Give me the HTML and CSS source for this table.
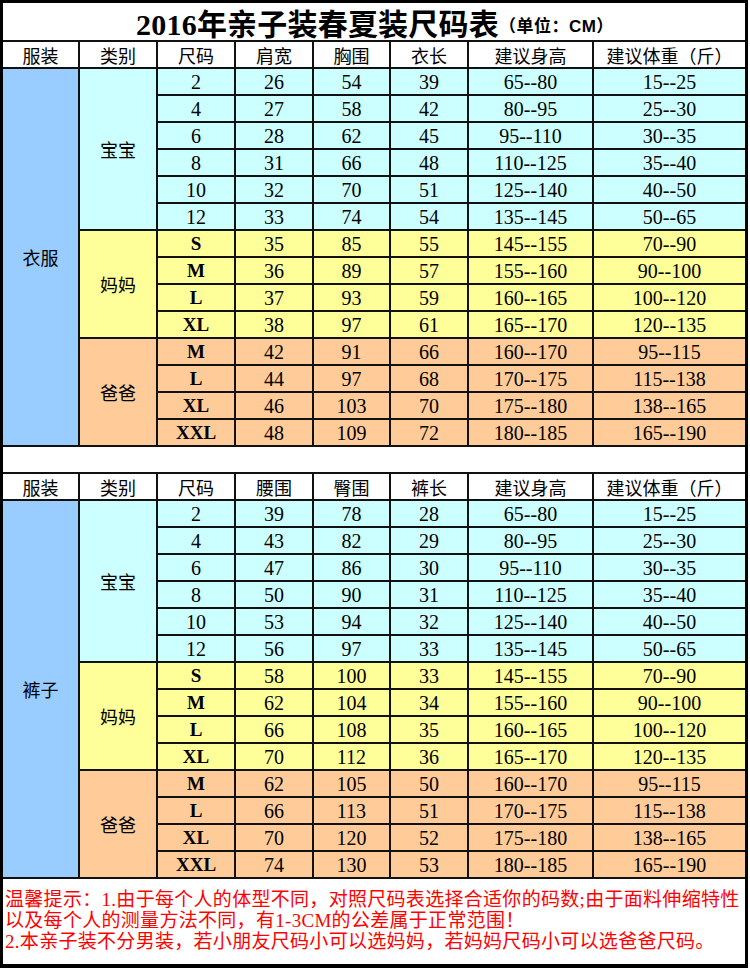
FILE: index.html
```html
<!DOCTYPE html>
<html lang="zh-CN">
<head>
<meta charset="utf-8">
<title>2016年亲子装春夏装尺码表</title>
<link rel="stylesheet" href="styles.css">
</head>
<body>
<div class="sheet">
  <div class="title"><span class="t-main">2016年亲子装春夏装尺码表</span><span class="t-unit">（单位：CM）</span></div>

  <div class="row head">
    <div>服装</div><div>类别</div><div>尺码</div><div>肩宽</div><div>胸围</div><div>衣长</div><div>建议身高</div><div>建议体重（斤）</div>
  </div>

  <div class="row b">
    <div class="group g-top">衣服</div><div class="cat c6">宝宝</div>
    <div>2</div><div>26</div><div>54</div><div>39</div><div>65--80</div><div>15--25</div>
  </div>
  <div class="row b"><div>4</div><div>27</div><div>58</div><div>42</div><div>80--95</div><div>25--30</div></div>
  <div class="row b"><div>6</div><div>28</div><div>62</div><div>45</div><div>95--110</div><div>30--35</div></div>
  <div class="row b"><div>8</div><div>31</div><div>66</div><div>48</div><div>110--125</div><div>35--40</div></div>
  <div class="row b"><div>10</div><div>32</div><div>70</div><div>51</div><div>125--140</div><div>40--50</div></div>
  <div class="row b"><div>12</div><div>33</div><div>74</div><div>54</div><div>135--145</div><div>50--65</div></div>

  <div class="row m"><div class="cat c4">妈妈</div><div class="sz">S</div><div>35</div><div>85</div><div>55</div><div>145--155</div><div>70--90</div></div>
  <div class="row m"><div class="sz">M</div><div>36</div><div>89</div><div>57</div><div>155--160</div><div>90--100</div></div>
  <div class="row m"><div class="sz">L</div><div>37</div><div>93</div><div>59</div><div>160--165</div><div>100--120</div></div>
  <div class="row m"><div class="sz">XL</div><div>38</div><div>97</div><div>61</div><div>165--170</div><div>120--135</div></div>

  <div class="row p"><div class="cat c4">爸爸</div><div class="sz">M</div><div>42</div><div>91</div><div>66</div><div>160--170</div><div>95--115</div></div>
  <div class="row p"><div class="sz">L</div><div>44</div><div>97</div><div>68</div><div>170--175</div><div>115--138</div></div>
  <div class="row p"><div class="sz">XL</div><div>46</div><div>103</div><div>70</div><div>175--180</div><div>138--165</div></div>
  <div class="row p"><div class="sz">XXL</div><div>48</div><div>109</div><div>72</div><div>180--185</div><div>165--190</div></div>

  <div class="blank"></div>

  <div class="row head">
    <div>服装</div><div>类别</div><div>尺码</div><div>腰围</div><div>臀围</div><div>裤长</div><div>建议身高</div><div>建议体重（斤）</div>
  </div>

  <div class="row b">
    <div class="group g-top">裤子</div><div class="cat c6">宝宝</div>
    <div>2</div><div>39</div><div>78</div><div>28</div><div>65--80</div><div>15--25</div>
  </div>
  <div class="row b"><div>4</div><div>43</div><div>82</div><div>29</div><div>80--95</div><div>25--30</div></div>
  <div class="row b"><div>6</div><div>47</div><div>86</div><div>30</div><div>95--110</div><div>30--35</div></div>
  <div class="row b"><div>8</div><div>50</div><div>90</div><div>31</div><div>110--125</div><div>35--40</div></div>
  <div class="row b"><div>10</div><div>53</div><div>94</div><div>32</div><div>125--140</div><div>40--50</div></div>
  <div class="row b"><div>12</div><div>56</div><div>97</div><div>33</div><div>135--145</div><div>50--65</div></div>

  <div class="row m"><div class="cat c4">妈妈</div><div class="sz">S</div><div>58</div><div>100</div><div>33</div><div>145--155</div><div>70--90</div></div>
  <div class="row m"><div class="sz">M</div><div>62</div><div>104</div><div>34</div><div>155--160</div><div>90--100</div></div>
  <div class="row m"><div class="sz">L</div><div>66</div><div>108</div><div>35</div><div>160--165</div><div>100--120</div></div>
  <div class="row m"><div class="sz">XL</div><div>70</div><div>112</div><div>36</div><div>165--170</div><div>120--135</div></div>

  <div class="row p"><div class="cat c4">爸爸</div><div class="sz">M</div><div>62</div><div>105</div><div>50</div><div>160--170</div><div>95--115</div></div>
  <div class="row p"><div class="sz">L</div><div>66</div><div>113</div><div>51</div><div>170--175</div><div>115--138</div></div>
  <div class="row p"><div class="sz">XL</div><div>70</div><div>120</div><div>52</div><div>175--180</div><div>138--165</div></div>
  <div class="row p"><div class="sz">XXL</div><div>74</div><div>130</div><div>53</div><div>180--185</div><div>165--190</div></div>

  <div class="notes">温馨提示：1.由于每个人的体型不同，对照尺码表选择合适你的码数;由于面料伸缩特性<br>以及每个人的测量方法不同，有1-3CM的公差属于正常范围！<br>2.本亲子装不分男装，若小朋友尺码小可以选妈妈，若妈妈尺码小可以选爸爸尺码。</div>
</div>
</body>
</html>
```

FILE: styles.css
```css
html, body {
  margin: 0;
  padding: 0;
  background: #ffffff;
}

.sheet {
  box-sizing: border-box;
  width: 748px;
  height: 968px;
  border: 3px solid #000;
  border-bottom-width: 4px;
  background: #111;
  display: grid;
  grid-template-columns: 75px 76px 76px 76px 75px 76px 123px 151px;
  grid-template-rows: 37px repeat(31, 25px) 1fr;
  gap: 2px;
  font-family: "Liberation Serif", "Noto Sans CJK SC", serif;
  font-size: 20px;
  color: #000;
}

.row {
  display: contents;
}

.row > div {
  display: flex;
  align-items: center;
  justify-content: center;
  white-space: nowrap;
  line-height: 1;
}

.title {
  grid-column: 1 / -1;
  background: #fff;
  display: flex;
  align-items: center;
  justify-content: center;
  padding-left: 2px;
  white-space: nowrap;
}

.t-main {
  font-family: "Liberation Serif", "Noto Sans CJK SC", serif;
  font-weight: 700;
  font-size: 30px;
  letter-spacing: 0.2px;
}

.t-unit {
  font-family: "Liberation Sans", "Noto Sans CJK SC", sans-serif;
  font-weight: 700;
  font-size: 17px;
  letter-spacing: 0.5px;
  margin-top: 6px;
}

.head > div {
  background: #fff;
  font-family: "Noto Sans CJK SC", sans-serif;
  font-size: 18px;
}

.b > div { background: #ccffff; }
.m > div { background: #ffff99; }
.p > div { background: #ffcc99; }

.row > .group {
  grid-row: span 14;
  background: #99ccff;
  font-family: "Noto Sans CJK SC", sans-serif;
  font-size: 18px;
}

.row > .cat {
  font-family: "Noto Sans CJK SC", sans-serif;
  font-size: 18px;
}

.row > .c6 { grid-row: span 6; }
.row > .c4 { grid-row: span 4; }

.row > .sz {
  font-weight: 700;
  font-size: 19px;
}

.blank {
  grid-column: 1 / -1;
  background: #fff;
}

.notes {
  grid-column: 1 / -1;
  background: #fff;
  color: #ff0000;
  font-family: "Liberation Serif", "Noto Sans CJK SC", serif;
  font-size: 19px;
  letter-spacing: 0.3px;
  line-height: 21px;
  padding: 10px 0 0 2px;
  white-space: nowrap;
  overflow: hidden;
}
```
